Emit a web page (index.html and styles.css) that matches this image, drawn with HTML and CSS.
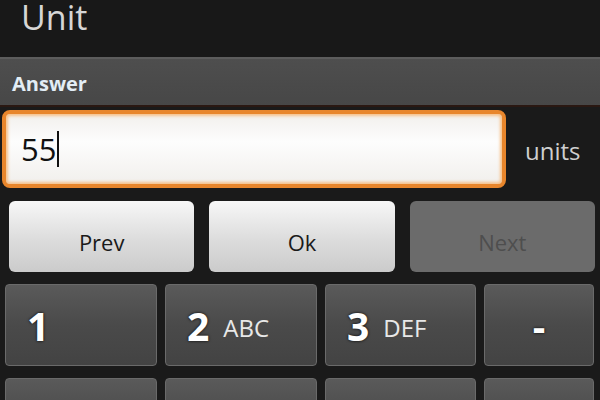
FILE: index.html
```html
<!DOCTYPE html>
<html lang="en">
<head>
    <meta charset="UTF-8">
    <title>Unit</title>
    <link rel="stylesheet" href="styles.css">
</head>
<body>
    <div class="title">Unit</div>
    <div class="section-header">Answer</div>

    <div class="answer-row">
        <div class="answer-box"><span class="answer-text">55</span><span class="caret"></span></div>
        <div class="unit-label">units</div>
    </div>

    <div class="nav-row">
        <button class="nav-btn">Prev</button>
        <button class="nav-btn">Ok</button>
        <button class="nav-btn disabled">Next</button>
    </div>

    <div class="keypad">
        <div class="key"><span class="digit">1</span></div>
        <div class="key"><span class="digit">2</span><span class="letters">ABC</span></div>
        <div class="key"><span class="digit">3</span><span class="letters">DEF</span></div>
        <div class="key center"><span class="digit">-</span></div>
        <div class="key"></div>
        <div class="key"></div>
        <div class="key"></div>
        <div class="key"></div>
    </div>
</body>
</html>
```

FILE: styles.css
```css
body {
    margin: 0;
    background-color: #1a1a1a;
    font-family: "Open Sans", "DejaVu Sans", sans-serif;
    width: 600px;
    height: 400px;
    overflow: hidden;
}
.title {
    height: 57px;
    background-color: #181818;
    color: #d6d6d6;
    font-size: 34px;
    line-height: 34px;
    padding-left: 21px;
    box-sizing: border-box;
}
.section-header {
    height: 50px;
    box-sizing: border-box;
    background: linear-gradient(#4e4e4e, #474747);
    border-top: 2px solid #5c5c5c;
    border-bottom: 2px solid #2a1812;
    color: #e2edf5;
    font-weight: bold;
    font-size: 20px;
    padding: 11px 0 0 12px;
}
.answer-row {
    display: flex;
    align-items: center;
    padding: 3px 0 0 2px;
}
.answer-box {
    width: 504px;
    height: 78px;
    box-sizing: border-box;
    border: 4px solid #e8862c;
    border-radius: 8px;
    background: linear-gradient(#f2f0ed, #fdfdfd 40%, #f1efec);
    box-shadow: inset 0 0 3px 2px #f6c28c;
    display: flex;
    align-items: center;
    padding-left: 15px;
}
.answer-text {
    font-size: 31px;
    color: #111;
}
.caret {
    width: 2px;
    height: 36px;
    background-color: #111;
    margin-left: 1px;
}
.unit-label {
    color: #cfcfcf;
    font-size: 24px;
    margin-left: 19px;
    padding-top: 2px;
}
.nav-row {
    display: flex;
    gap: 15px;
    padding: 13px 5px 0 9px;
}
.nav-btn {
    flex: 1;
    height: 71px;
    border: none;
    border-radius: 6px;
    background: linear-gradient(#f7f7f7, #dcdcdc 55%, #cbcbcb);
    font-family: "Open Sans", "DejaVu Sans", sans-serif;
    font-size: 22px;
    color: #1a1a1a;
    padding-top: 12px;
}
.nav-btn.disabled {
    background: #6b6b6b;
    color: #4e4e4e;
}
.keypad {
    display: grid;
    grid-template-columns: 152px 152px 151px 110px;
    grid-auto-rows: 82px;
    column-gap: 8px;
    row-gap: 12px;
    padding: 12px 0 0 5px;
}
.key {
    border-radius: 4px;
    background: linear-gradient(#5a5a5a, #4a4a4a 50%, #434343);
    border: 1px solid #6a6a6a;
    box-sizing: border-box;
    display: flex;
    align-items: center;
    padding-left: 21px;
    color: #fff;
}
.key.center {
    justify-content: center;
    padding-left: 0;
}
.digit {
    font-size: 39px;
    font-weight: bold;
    text-shadow: 0 0 3px #000;
}
.letters {
    font-size: 24px;
    color: #e8e8e8;
    margin-left: 14px;
    padding-top: 5px;
}
```
